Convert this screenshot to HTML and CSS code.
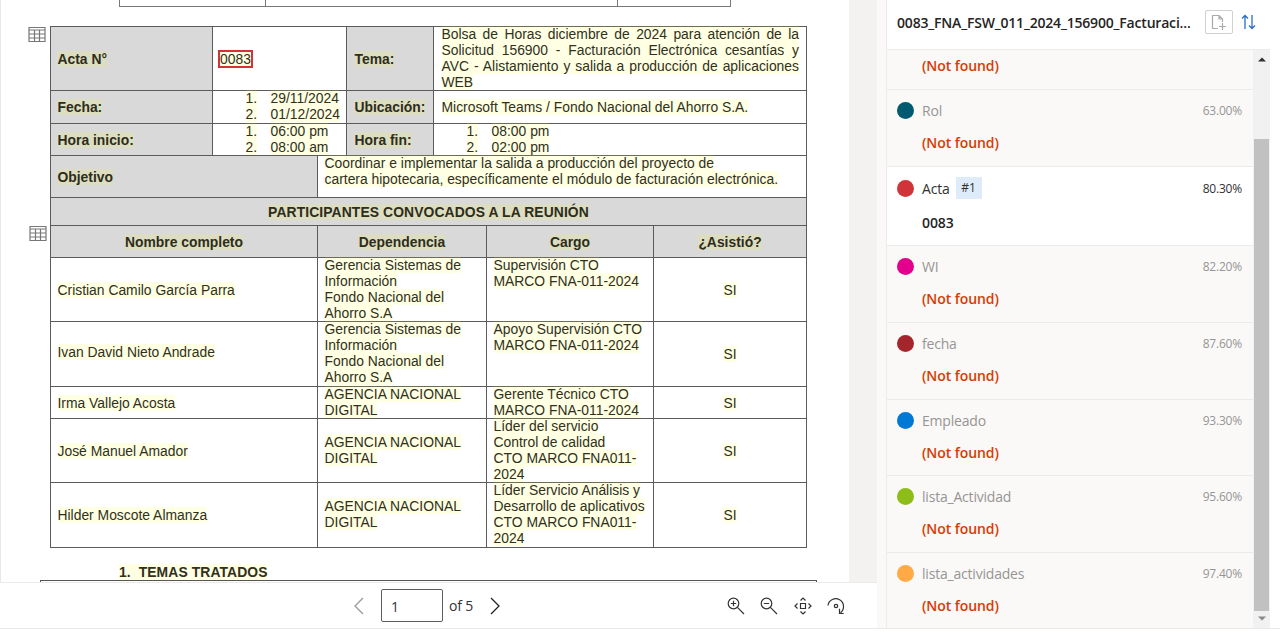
FILE: index.html
```html
<!DOCTYPE html>
<html lang="es">
<head>
<meta charset="utf-8">
<title>Acta 0083</title>
<link rel="stylesheet" href="styles.css">
</head>
<body>
<div class="app">
  <main class="viewer">
    <div class="canvas">
      <div class="page">
        <div class="prev-table"><i></i><i></i><i></i></div>
        <div class="doc">
          <svg class="tbl-icon first" width="18" height="17" viewBox="0 0 18 17"><path d="M1 1.500h16v14H1zM1 4h16M1 8h16M1 12h16M6.500 4v11.500M11.500 4v11.500"/></svg>
          <svg class="tbl-icon second" width="18" height="17" viewBox="0 0 18 17"><path d="M1 1.500h16v14H1zM1 4h16M1 8h16M1 12h16M6.500 4v11.500M11.500 4v11.500"/></svg>
          <div class="row info r64">
            <div class="cell head"><b>Acta N°</b></div>
            <div class="cell acta"><span class="boxed">0083</span></div>
            <div class="cell head"><b>Tema:</b></div>
            <div class="cell lines tema">
              <p class="just"><span>Bolsa de Horas diciembre de 2024 para atención de la</span></p>
              <p class="just"><span>Solicitud 156900 - Facturación Electrónica cesantías y</span></p>
              <p class="just"><span>AVC - Alistamiento y salida a producción de aplicaciones</span></p>
              <p><span>WEB</span></p>
            </div>
          </div>
          <div class="row info r33">
            <div class="cell head"><b>Fecha:</b></div>
            <div class="cell lines num"><p><span>1.</span><span>29/11/2024</span></p><p><span>2.</span><span>01/12/2024</span></p></div>
            <div class="cell head"><b>Ubicación:</b></div>
            <div class="cell"><span>Microsoft Teams / Fondo Nacional del Ahorro S.A.</span></div>
          </div>
          <div class="row info r32">
            <div class="cell head"><b>Hora inicio:</b></div>
            <div class="cell lines num"><p><span>1.</span><span>06:00 pm</span></p><p><span>2.</span><span>08:00 am</span></p></div>
            <div class="cell head"><b>Hora fin:</b></div>
            <div class="cell lines num"><p><span>1.</span><span>08:00 pm</span></p><p><span>2.</span><span>02:00 pm</span></p></div>
          </div>
          <div class="row goal r42">
            <div class="cell head"><b>Objetivo</b></div>
            <div class="cell lines"><p><span>Coordinar e implementar la salida a producción del proyecto de</span></p><p><span>cartera hipotecaria, específicamente el módulo de facturación electrónica.</span></p></div>
          </div>
          <div class="row full r28"><div class="cell head mid"><b class="title">PARTICIPANTES CONVOCADOS A LA REUNIÓN</b></div></div>
          <div class="row people r32">
            <div class="cell head mid"><b>Nombre completo</b></div><div class="cell head mid"><b>Dependencia</b></div><div class="cell head mid"><b>Cargo</b></div><div class="cell head mid"><b>¿Asistió?</b></div>
          </div>
          <div class="row people r64">
            <div class="cell"><span>Cristian Camilo García Parra</span></div>
            <div class="cell lines"><p><span>Gerencia Sistemas de</span></p><p><span>Información</span></p><p><span>Fondo Nacional del</span></p><p><span>Ahorro S.A</span></p></div>
            <div class="cell lines"><p><span>Supervisión CTO</span></p><p><span>MARCO FNA-011-2024</span></p></div>
            <div class="cell mid"><span>SI</span></div>
          </div>
          <div class="row people r65">
            <div class="cell up"><span>Ivan David Nieto Andrade</span></div>
            <div class="cell lines"><p><span>Gerencia Sistemas de</span></p><p><span>Información</span></p><p><span>Fondo Nacional del</span></p><p><span>Ahorro S.A</span></p></div>
            <div class="cell lines"><p><span>Apoyo Supervisión CTO</span></p><p><span>MARCO FNA-011-2024</span></p></div>
            <div class="cell mid"><span>SI</span></div>
          </div>
          <div class="row people r32">
            <div class="cell"><span>Irma Vallejo Acosta</span></div>
            <div class="cell lines"><p><span>AGENCIA NACIONAL</span></p><p><span>DIGITAL</span></p></div>
            <div class="cell lines"><p><span>Gerente Técnico CTO</span></p><p><span>MARCO FNA-011-2024</span></p></div>
            <div class="cell mid"><span>SI</span></div>
          </div>
          <div class="row people r64">
            <div class="cell"><span>José Manuel Amador</span></div>
            <div class="cell stack"><p><span>AGENCIA NACIONAL</span></p><p><span>DIGITAL</span></p></div>
            <div class="cell lines"><p><span>Líder del servicio</span></p><p><span>Control de calidad</span></p><p><span>CTO MARCO FNA011-</span></p><p><span>2024</span></p></div>
            <div class="cell mid"><span>SI</span></div>
          </div>
          <div class="row people r65">
            <div class="cell"><span>Hilder Moscote Almanza</span></div>
            <div class="cell stack"><p><span>AGENCIA NACIONAL</span></p><p><span>DIGITAL</span></p></div>
            <div class="cell lines"><p><span>Líder Servicio Análisis y</span></p><p><span>Desarrollo de aplicativos</span></p><p><span>CTO MARCO FNA011-</span></p><p><span>2024</span></p></div>
            <div class="cell mid"><span>SI</span></div>
          </div>
        </div>
        <div class="section"><b>1.&nbsp; TEMAS TRATADOS</b></div>
        <div class="next-table"></div>
      </div>
    </div>
    <footer class="pager">
      <svg class="chev off" width="10" height="18" viewBox="0 0 10 18"><path d="M9 1L1 9l8 8"/></svg>
      <div class="page-input">1</div>
      <span class="of">of 5</span>
      <svg class="chev" width="10" height="18" viewBox="0 0 10 18"><path d="M1 1l8 8-8 8"/></svg>
      <div class="tools">
        <svg width="18" height="18" viewBox="0 0 18 18"><circle cx="6.500" cy="6.500" r="5.300"/><path d="M10.400 10.400L17 17M3.800 6.500h5.400M6.500 3.800v5.400"/></svg>
        <svg width="18" height="18" viewBox="0 0 18 18"><circle cx="6.500" cy="6.500" r="5.300"/><path d="M10.400 10.400L17 17M3.800 6.500h5.400"/></svg>
        <svg width="18" height="18" viewBox="0 0 18 18"><path d="M6.500 6.500h5v5h-5zM6.500 3.500L9 1l2.500 2.500M6.500 14.500L9 17l2.500-2.500M3.500 6.500L1 9l2.500 2.500M14.500 6.500L17 9l-2.500 2.500"/></svg>
        <svg width="18" height="18" viewBox="0 0 18 18"><path d="M1 8.500a7.800 7.800 0 1 1 12.500 7.200M12.500 11.800v4.700h4.200"/><circle cx="9" cy="9" r="1.700"/></svg>
      </div>
    </footer>
  </main>
  <aside class="panel">
    <header class="panel-head">
      <h1>0083_FNA_FSW_011_2024_156900_Facturaci...</h1>
      <div class="add"><svg width="16" height="17" viewBox="0 0 16 17"><path d="M7 14.500H1.500v-13H8l3.500 3.500v3M8 1.500V5h3.500M11.500 9v7M8 12.500h7"/></svg></div>
      <svg class="sort" width="15" height="16" viewBox="0 0 15 16"><path d="M4 15V1.500M1 4.500l3-3 3 3M11 1v13.500M8 11.500l3 3 3-3"/></svg>
    </header>
    <div class="panel-body">
      <div class="fields">
        <div class="field partial"><div class="value">(Not found)</div></div>
        <div class="field"><div class="top"><i class="dot teal"></i><span class="name">Rol</span><span class="pct">63.00%</span></div><div class="value">(Not found)</div></div>
        <div class="field active"><div class="top"><i class="dot red"></i><span class="name">Acta</span><span class="tag">#1</span><span class="pct">80.30%</span></div><div class="value">0083</div></div>
        <div class="field"><div class="top"><i class="dot pink"></i><span class="name">WI</span><span class="pct">82.20%</span></div><div class="value">(Not found)</div></div>
        <div class="field"><div class="top"><i class="dot wine"></i><span class="name">fecha</span><span class="pct">87.60%</span></div><div class="value">(Not found)</div></div>
        <div class="field"><div class="top"><i class="dot blue"></i><span class="name">Empleado</span><span class="pct">93.30%</span></div><div class="value">(Not found)</div></div>
        <div class="field"><div class="top"><i class="dot green"></i><span class="name">lista_Actividad</span><span class="pct">95.60%</span></div><div class="value">(Not found)</div></div>
        <div class="field"><div class="top"><i class="dot orange"></i><span class="name">lista_actividades</span><span class="pct">97.40%</span></div><div class="value">(Not found)</div></div>
      </div>
      <div class="scroll">
        <svg width="8" height="5" viewBox="0 0 8 5"><path d="M0 4.500L4 .5l4 4z" fill="#303030"/></svg>
        <div class="thumb"></div>
        <svg width="8" height="5" viewBox="0 0 8 5"><path d="M0 .5l4 4 4-4z" fill="#8a8a8a"/></svg>
      </div>
    </div>
  </aside>
</div>
</body>
</html>
```
FILE: styles.css
```css
* { box-sizing: border-box; }
body { margin: 0; background: #fff; overflow: hidden; }
p, h1 { margin: 0; }
.app { display: flex; width: 1280px; height: 629px; background: #faf9f8; border-bottom: 1px solid #ebe9e8; }

/* document viewer */
.viewer { width: 877px; height: 628px; display: flex; flex-direction: column; }
.canvas { height: 582px; background: #f3f2f1; overflow: hidden; }
.page {
  width: 849px; height: 582px; background: #fff; border-left: 1px solid #e8e8e8; overflow: hidden;
  font-family: "Liberation Sans", Arial, sans-serif; font-size: 13.88px; line-height: 16px; color: #30301c;
}
.prev-table {
  display: grid; grid-template-columns: 145px 352px 1fr; width: 612px; height: 7px; margin-left: 118px;
  border: solid #777; border-width: 0 1px 1px;
}
.prev-table i + i { border-left: 1px solid #777; }
.doc { position: relative; width: 757px; margin: 19px 0 0 49px; border: 1px solid #5b5b5b; border-top: 0; }
.row { display: grid; grid-template-rows: 100%; border-top: 1px solid #5b5b5b; }
.info { grid-template-columns: 161px 134px 87px 1fr; }
.goal { grid-template-columns: 266px 1fr; }
.full { grid-template-columns: 1fr; }
.people { grid-template-columns: 266px 169px 167px 1fr; }
.r28 { height: 28px; } .r32 { height: 32px; } .r33 { height: 33px; }
.r42 { height: 42px; } .r64 { height: 64px; } .r65 { height: 65px; }
.cell { display: flex; align-items: center; padding: 0 0 0 6.5px; white-space: nowrap; min-width: 0; }
.cell + .cell { border-left: 1px solid #5b5b5b; }
.info .cell + .cell { padding-left: 7.5px; }
.cell.lines, .cell.stack { display: block; }
.cell.stack { padding-top: 16px; }
.cell.lines p, .cell.stack p { height: 16px; margin-top: -.6px; margin-bottom: .6px; }
.cell.mid, .cell + .cell.mid { justify-content: center; padding: 0; }
.cell.up { padding-bottom: 4px; }
.head { background: #d9d9d9; }
.page span, .page b { background: rgba(255, 255, 0, .11); }
.page .head b { color: #2d2d1c; }
.page .title { letter-spacing: .1px; }
.info .cell.tema { padding-right: 7px; }
.just { text-align: justify; text-align-last: justify; }
.num p { display: flex; gap: 13.5px; padding-left: 25px; }
.info .cell.acta { padding-left: 5px; }
.page .boxed { border: 2px solid #d13438; line-height: 14px; padding: 0; }
.tbl-icon { position: absolute; fill: none; stroke: #777; stroke-width: 1.2; }
.first { left: -23px; top: 0; }
.second { left: -22px; top: 199px; }
.section { margin: 16px 0 0 118px; height: 16px; letter-spacing: .1px; }
.next-table { width: 777px; height: 6px; margin-left: 39px; border: 1px solid #555; border-bottom: 0; }

.pager {
  display: flex; align-items: center; height: 46px; padding: 0 32px 0 354px; background: #fff;
  border-top: 1px solid #edebe9; font: 14px "Open Sans", sans-serif; color: #333;
}
.chev { fill: none; stroke: #222; stroke-width: 1.3; }
.chev.off { stroke: #999; }
.page-input { width: 62px; height: 33px; margin: 0 6px 0 17px; border: 1px solid #605e5c; border-radius: 2px; padding-left: 9px; line-height: 33px; }
.of { width: 25px; margin-right: 16px; white-space: nowrap; letter-spacing: -.2px; }
.tools { display: flex; gap: 15.300px; margin-left: auto; }
.tools svg { fill: none; stroke: #333; stroke-width: 1.2; }

/* extracted fields */
.panel { height: 628px; margin-left: 9px; border-left: 1px solid #edebe9; font-family: "Open Sans", sans-serif; flex: 1; background: #fff; }
.panel-head { display: flex; align-items: center; height: 50px; width: 383px; padding: 0 14px 5px 10px; border-bottom: 1px solid #edebe9; }
.panel-head h1 { width: 296px; margin-right: 12px; font-size: 14px; font-weight: 600; letter-spacing: -.19px; color: #252423; white-space: nowrap; }
.add { display: flex; align-items: center; justify-content: center; width: 28px; height: 24px; border: 1px solid #d2d0ce; border-radius: 2px; }
.add svg { fill: none; stroke: #aaa; stroke-width: 1.2; }
.sort { margin-left: 8px; fill: none; stroke: #2b6cc4; stroke-width: 1.3; }
.panel-body { display: flex; height: 578px; width: 383px; }
.fields { width: 366px; overflow: hidden; }
.field { height: 76.7px; padding: 9px 11px 0 10px; background: #faf9f8; border-bottom: 1px solid #edebe9; }
.field.partial { height: 40px; padding-top: 5px; }
.field.partial .value { margin-top: 0; }
.field.active { height: 79.6px; background: #fff; padding-top: 10px; }
.top { display: flex; align-items: center; height: 23px; color: #979593; }
.active .top { color: #323130; }
.dot { width: 17px; height: 17px; margin-right: 8px; border-radius: 50%; }
.teal { background: #005b70; } .red { background: #d13438; } .pink { background: #e3008c; } .wine { background: #a4262c; }
.blue { background: #0078d4; } .green { background: #8cbd18; } .orange { background: #ffaa44; }
.name { font-size: 14px; letter-spacing: -.2px; }
.tag { width: 26px; height: 22px; margin-left: 6px; background: #deecf9; font-size: 12px; line-height: 22px; text-align: center; }
.pct { margin-left: auto; font-size: 12px; letter-spacing: -.2px; }
.value { margin: 10px 0 0 25px; font-size: 14px; line-height: 22px; font-weight: 600; color: #d83b01; letter-spacing: -.08px; }
.active .value { color: #252423; margin-top: 12px; }
.scroll { display: flex; flex-direction: column; align-items: center; justify-content: space-between; width: 17px; padding: 7px 0; background: #f1f1f1; }
.thumb { width: 15px; height: 472px; margin: 77px 0 5px; background: #c1c1c1; }
```
